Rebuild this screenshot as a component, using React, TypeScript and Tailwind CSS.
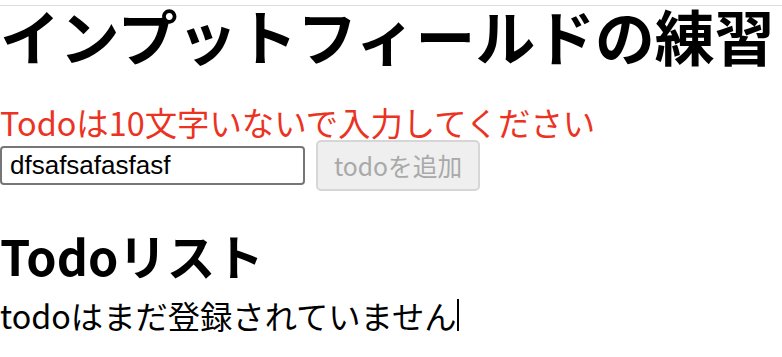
import React from "react";

export default function App() {
  return (
    <div
      className="w-[782px] h-[357px] bg-white text-black overflow-hidden"
      style={{ fontFamily: '"Noto Sans CJK JP", "Noto Sans", sans-serif' }}
    >
      <div className="mt-[5px] h-[1px] bg-[#dcdcdc]" />
      <h1 className="mt-[0px] text-[59.8px] leading-[59px] font-bold whitespace-nowrap">
        インプットフィールドの練習
      </h1>
      <p className="mt-[41px] text-[32.4px] leading-[32px] text-[#eb3323] whitespace-nowrap">
        Todoは10文字いないで入力してください
      </p>
      <div className="mt-[2px] flex items-center gap-[11px]">
        <input
          className="w-[305px] h-[39px] border-2 border-[#767676] rounded-[4px] px-[8px] text-[26px] text-black outline-none"
          style={{ fontFamily: '"Liberation Sans", Arial, sans-serif' }}
          defaultValue="dfsafsafasfasf"
        />
        <button
          disabled
          className="w-[164px] h-[51px] bg-[#efefef] border-2 border-[#d6d6d6] rounded-[5px] text-[24.7px] leading-none text-[#a9a9a9]"
        >
          todoを追加
        </button>
      </div>
      <h2 className="mt-[40px] text-[48.5px] leading-[48px] font-bold whitespace-nowrap">
        Todoリスト
      </h2>
      <p className="mt-[20px] text-[32.3px] leading-[32px] whitespace-nowrap flex items-center">
        <span>todoはまだ登録されていません</span>
        <span className="inline-block w-[2px] h-[32px] bg-black ml-[1px]" />
      </p>
    </div>
  );
}
